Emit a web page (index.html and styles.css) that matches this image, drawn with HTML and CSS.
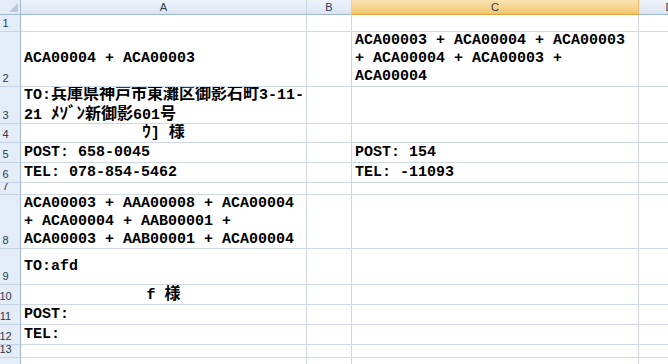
FILE: index.html
```html
<!DOCTYPE html>
<html lang="ja">
<head>
    <meta charset="UTF-8">
    <meta name="viewport" content="width=device-width, initial-scale=1.0">
    <title>Book1</title>
    <link rel="stylesheet" href="styles.css">
</head>
<body>
    <div class="sheet">
        <!-- column headers -->
        <div class="corner"><span class="tri"></span></div>
        <div class="colhead">A</div>
        <div class="colhead">B</div>
        <div class="colhead sel">C</div>
        <div class="colhead">D</div>

        <div class="rowhead">1</div>
        <div class="cell"></div>
        <div class="cell"></div>
        <div class="cell"></div>
        <div class="cell"></div>

        <div class="rowhead">2</div>
        <div class="cell">ACA00004 + ACA00003</div>
        <div class="cell"></div>
        <div class="cell">ACA00003 + ACA00004 + ACA00003<br>+ ACA00004 + ACA00003 +<br>ACA00004</div>
        <div class="cell"></div>

        <div class="rowhead">3</div>
        <div class="cell"><p>TO:<span class="jp">兵庫県神戸市東灘区御影石町</span>3-11-<br>21 <span class="jp kana">ﾒｿﾞﾝ</span><span class="jp">新御影</span>601<span class="jp">号</span></p></div>
        <div class="cell"></div>
        <div class="cell"></div>
        <div class="cell"></div>

        <div class="rowhead">4</div>
        <div class="cell center"><p><span class="jp kana">ｳ</span>] <span class="jp">様</span></p></div>
        <div class="cell"></div>
        <div class="cell"></div>
        <div class="cell"></div>

        <div class="rowhead">5</div>
        <div class="cell">POST: 658-0045</div>
        <div class="cell"></div>
        <div class="cell">POST: 154</div>
        <div class="cell"></div>

        <div class="rowhead">6</div>
        <div class="cell">TEL: 078-854-5462</div>
        <div class="cell"></div>
        <div class="cell">TEL: -11093</div>
        <div class="cell"></div>

        <div class="rowhead">7</div>
        <div class="cell"></div>
        <div class="cell"></div>
        <div class="cell"></div>
        <div class="cell"></div>

        <div class="rowhead">8</div>
        <div class="cell">ACA00003 + AAA00008 + ACA00004<br>+ ACA00004 + AAB00001 +<br>ACA00003 + AAB00001 + ACA00004</div>
        <div class="cell"></div>
        <div class="cell"></div>
        <div class="cell"></div>

        <div class="rowhead">9</div>
        <div class="cell">TO:afd</div>
        <div class="cell"></div>
        <div class="cell"></div>
        <div class="cell"></div>

        <div class="rowhead">10</div>
        <div class="cell center"><p>f <span class="jp">様</span></p></div>
        <div class="cell"></div>
        <div class="cell"></div>
        <div class="cell"></div>

        <div class="rowhead">11</div>
        <div class="cell">POST:</div>
        <div class="cell"></div>
        <div class="cell"></div>
        <div class="cell"></div>

        <div class="rowhead">12</div>
        <div class="cell">TEL:</div>
        <div class="cell"></div>
        <div class="cell"></div>
        <div class="cell"></div>

        <div class="rowhead">13</div>
        <div class="cell"></div>
        <div class="cell"></div>
        <div class="cell"></div>
        <div class="cell"></div>

        <div class="rowhead">14</div>
        <div class="cell"></div>
        <div class="cell"></div>
        <div class="cell"></div>
        <div class="cell"></div>
    </div>
</body>
</html>
```

FILE: styles.css
```css
* { margin: 0; padding: 0; box-sizing: border-box; }
html, body { width: 668px; height: 364px; overflow: hidden; background: #fff; }

.sheet {
    display: grid;
    grid-template-columns: 21px 286px 45px 287px 62px;
    grid-template-rows: 15px 17px 55px 37px 19px 20px 20px 12px 54px 36px 20px 20px 20px 13px 20px;
}

/* headers */
.corner, .colhead, .rowhead {
    font-family: "Liberation Sans", Arial, sans-serif;
    font-size: 11px;
    color: #2c3a4c;
    overflow: hidden;
}
.corner { position: relative; background: #e4ecf7; border-right: 1px solid #9eb6ce; border-bottom: 1px solid #9eb6ce; }
.corner .tri { position: absolute; right: 2px; bottom: 2px; width: 0; height: 0; border-left: 9px solid transparent; border-bottom: 9px solid #b9c9dc; }
.colhead {
    display: flex; align-items: center; justify-content: center;
    line-height: 14px;
    background: linear-gradient(#eef3fa, #dbe5f2);
    border-right: 1px solid #c5d3e3;
    border-bottom: 1px solid #9eb6ce;
}
.colhead.sel { background: linear-gradient(#fbe3b4, #f4c66c); border-bottom-color: #e4a23c; border-right-color: #e8b96a; }
.rowhead {
    display: flex; align-items: flex-end; justify-content: center;
    padding-right: 9px; padding-bottom: 1px;
    line-height: 13px;
    background: #e4ecf7;
    border-right: 1px solid #9eb6ce;
    border-bottom: 1px solid #c5d3e3;
}

/* cells */
.cell {
    display: flex; align-items: center;
    padding: 0 3px;
    font: bold 15px/18px "Liberation Mono", "Noto Sans CJK JP", monospace;
    color: #000;
    white-space: nowrap;
    overflow: hidden;
    border-right: 1px solid #d0d7e5;
    border-bottom: 1px solid #d0d7e5;
}
.cell.center { justify-content: center; }
.jp { font-family: "Noto Sans CJK JP", sans-serif; font-size: 16px; line-height: 14px; }
.jp.kana { font-size: 17px; }
```
